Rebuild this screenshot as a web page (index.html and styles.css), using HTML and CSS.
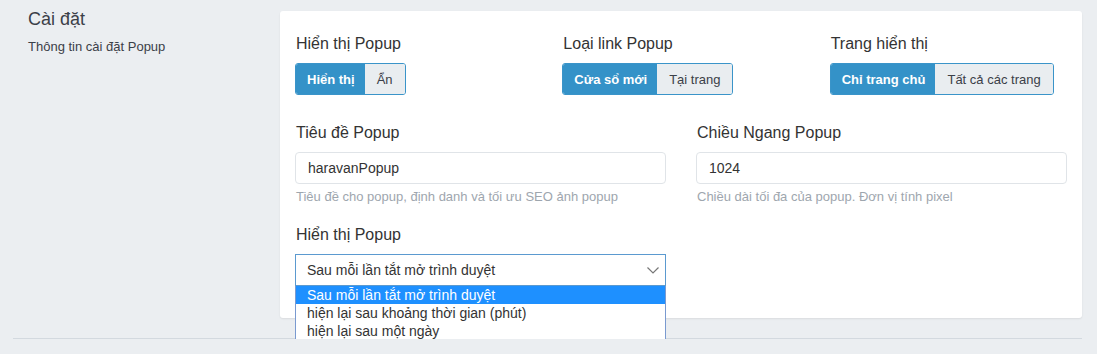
FILE: index.html
```html
<!DOCTYPE html>
<html lang="vi">
	<head>
		<meta charset="utf-8">
		<title>Cài đặt Popup</title>
		<link rel="stylesheet" href="styles.css">
	</head>
	<body>
		<div class="page">
			<div class="section">
				<div class="section-info">
					<h2 class="section-title">Cài đặt</h2>
					<p class="section-desc">Thông tin cài đặt Popup</p>
				</div>
				<div class="card">
					<div class="row row-3">
						<div class="field">
							<label class="field-label">Hiển thị Popup</label>
							<div class="btn-group">
								<button class="btn active">Hiển thị</button>
								<button class="btn">Ẩn</button>
							</div>
						</div>
						<div class="field">
							<label class="field-label">Loại link Popup</label>
							<div class="btn-group">
								<button class="btn active">Cửa sổ mới</button>
								<button class="btn">Tại trang</button>
							</div>
						</div>
						<div class="field">
							<label class="field-label">Trang hiển thị</label>
							<div class="btn-group">
								<button class="btn active">Chỉ trang chủ</button>
								<button class="btn">Tất cả các trang</button>
							</div>
						</div>
					</div>
					<div class="row row-2 row-inputs">
						<div class="field">
							<label class="field-label">Tiêu đề Popup</label>
							<input class="input" type="text" value="haravanPopup">
							<p class="help">Tiêu đề cho popup, định danh và tối ưu SEO ảnh popup</p>
						</div>
						<div class="field">
							<label class="field-label">Chiều Ngang Popup</label>
							<input class="input" type="text" value="1024">
							<p class="help">Chiều dài tối đa của popup. Đơn vị tính pixel</p>
						</div>
					</div>
					<div class="row row-2 row-select">
						<div class="field">
							<label class="field-label">Hiển thị Popup</label>
							<div class="select-wrap">
								<div class="select">
									<span>Sau mỗi lần tắt mở trình duyệt</span>
									<svg class="chevron" width="12" height="7" viewBox="0 0 12 7">
										<polyline points="0.5,0.5 6,6 11.5,0.5" fill="none" stroke="#777" stroke-width="1.2"/>
									</svg>
								</div>
								<ul class="dropdown">
									<li class="selected">Sau mỗi lần tắt mở trình duyệt</li>
									<li>hiện lại sau khoảng thời gian (phút)</li>
									<li>hiện lại sau một ngày</li>
								</ul>
							</div>
						</div>
					</div>
				</div>
			</div>
			<div class="divider"></div>
		</div>
	</body>
</html>
```

FILE: styles.css
```css
body{
	margin: 0;
	background-color: #ebeef1;
	font-family: 'Liberation Sans', Arial, sans-serif;
	color: #333;
}
.page{
	padding: 11px 15px 0 13px;
}
.section{
	display: flex;
	align-items: flex-start;
}
.section-info{
	width: 252px;
	padding-left: 15px;
	flex-shrink: 0;
}
.section-title{
	margin: 0;
	font-size: 18px;
	line-height: 17px;
	font-weight: normal;
	color: #3b4048;
}
.section-desc{
	margin: 10px 0 0;
	font-size: 13px;
	line-height: 18px;
	color: #3b4048;
}
.card{
	flex: 1;
	background-color: #fff;
	border-radius: 3px;
	box-shadow: 0 1px 2px rgba(0, 0, 0, 0.08);
	padding: 23px 15px 32px;
}
.row{
	display: grid;
	column-gap: 30px;
}
.row-3{
	grid-template-columns: 1fr 1fr 1fr;
}
.row-2{
	grid-template-columns: 1fr 1fr;
}
.row-inputs{
	margin-top: 28px;
}
.row-select{
	margin-top: 19px;
}
.field-label{
	display: block;
	font-size: 16px;
	line-height: 20px;
	margin-bottom: 9px;
	color: #333;
	padding-left: 1px;
}
.btn-group{
	display: inline-flex;
	border: 1px solid #3a94c9;
	border-radius: 3px;
	overflow: hidden;
	height: 32px;
	box-sizing: border-box;
}
.btn{
	border: 0;
	margin: 0;
	padding: 0 12px;
	height: 30px;
	font-family: inherit;
	font-size: 13px;
	background-color: #e9edf0;
	color: #3b4048;
}
.btn.active{
	background-color: #3492c8;
	color: #fff;
	font-weight: bold;
	padding: 0 10px 0 11px;
}
.input{
	display: block;
	width: 100%;
	box-sizing: border-box;
	height: 32px;
	border: 1px solid #e0e4e8;
	border-radius: 4px;
	padding: 0 12px;
	font-family: inherit;
	font-size: 14px;
	color: #333;
	outline: 0;
}
.help{
	margin: 4px 0 0;
	font-size: 13px;
	line-height: 18px;
	color: #9ea6ae;
	padding-left: 1px;
}
.select-wrap{
	position: relative;
}
.select{
	display: flex;
	align-items: center;
	justify-content: space-between;
	height: 32px;
	box-sizing: border-box;
	border: 1px solid #5b9ad0;
	padding: 0 6px 0 11px;
	font-size: 14px;
	color: #333;
}
.chevron{
	margin-top: 1px;
}
.dropdown{
	position: absolute;
	top: 32px;
	left: 0;
	right: 0;
	margin: 0;
	padding: 0;
	list-style: none;
	background-color: #fff;
	border: 1px solid #7a9ad0;
	border-top: 0;
	font-size: 14px;
	line-height: 18px;
	color: #333;
}
.dropdown li{
	padding-left: 11px;
}
.dropdown .selected{
	background-color: #1e90ff;
	color: #fff;
}
.divider{
	margin-top: 20px;
	border-top: 1px solid #d3d9df;
}
```
